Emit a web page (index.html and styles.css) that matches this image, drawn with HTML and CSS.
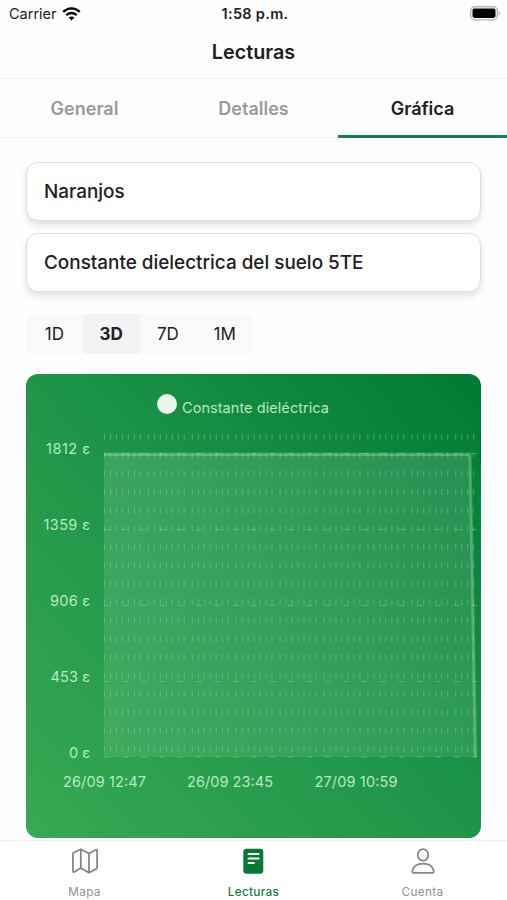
FILE: index.html
```html
<!DOCTYPE html>
<html lang="es">
<head>
    <meta charset="UTF-8">
    <meta name="viewport" content="width=device-width, initial-scale=1.0">
    <title>Lecturas</title>
    <link rel="stylesheet" href="styles.css">
</head>
<body>
    <div class="status-bar">
        <div class="carrier">
            <span>Carrier</span>
            <svg width="19" height="14" viewBox="0 0 19 14" fill="none" stroke="#000" stroke-width="2.4">
                <path d="M1.200 4.800C6 .2 13 .2 17.800 4.800"/>
                <path d="M4.200 8.200c3-2.900 7.600-2.900 10.600 0"/>
                <path d="M6.700 10.600c1.600-1.400 4-1.400 5.600 0L9.500 13.500z" fill="#000" stroke="none"/>
            </svg>
        </div>
        <div class="time">1:58 p.m.</div>
        <svg class="battery" width="31" height="15" viewBox="0 0 31 15">
            <rect x=".7" y=".7" width="26.600" height="13.200" rx="4" fill="#fff" stroke="#b5b5b5" stroke-width="1.400"/>
            <rect x="2.500" y="2.500" width="23" height="9.600" rx="2" fill="#000"/>
            <path d="M28.600 5v4.600q1.600-.8 1.600-2.300t-1.600-2.300z" fill="#b5b5b5"/>
        </svg>
    </div>
    <header>
        <h1>Lecturas</h1>
    </header>
    <nav class="tabs">
        <a class="tab">General</a>
        <a class="tab">Detalles</a>
        <a class="tab active">Gráfica</a>
    </nav>

    <main class="container">
        <div class="select">Naranjos</div>
        <div class="select">Constante dielectrica del suelo 5TE</div>
        <div class="ranges">
            <span class="range">1D</span>
            <span class="range selected">3D</span>
            <span class="range">7D</span>
            <span class="range">1M</span>
        </div>
        <div class="chart">
            <svg width="455" height="464" viewBox="26 374 455 464">
                <defs>
                    <linearGradient id="area" x1="0" y1="0" x2="0" y2="1">
                        <stop offset="0" stop-color="#fff" stop-opacity=".13"/>
                        <stop offset="1" stop-color="#fff" stop-opacity=".09"/>
                    </linearGradient>
                    <!-- one group of seven vertical grid lines -->
                    <pattern id="ticks" x="104" y="434" width="43.900" height="18.350" patternUnits="userSpaceOnUse">
                        <path d="M.5 0v6M6.500 0v6M12.500 0v6M18.400 0v6M24.400 0v6M30.400 0v6M36.300 0v6" stroke="#8fe0a4" stroke-opacity=".38" stroke-width="1"/>
                    </pattern>
                </defs>
                <path d="M104 454H470.500L476.500 757H104z" fill="url(#area)"/>
                <rect x="104" y="434" width="373" height="323" fill="url(#ticks)"/>
                <g class="grid">
                    <path d="M104 453.500H477"/>
                    <path d="M104 529.500H477"/>
                    <path d="M104 605.500H477"/>
                    <path d="M104 681.500H477"/>
                    <path d="M104 757H477"/>
                </g>
                <path class="line" d="M104 454.300H470L475.500 757"/>
                <circle cx="167" cy="404" r="10" fill="#e9f5ec"/>
                <text x="182" y="413" textLength="147">Constante dieléctrica</text>
                <g text-anchor="end">
                    <text x="90" y="454" textLength="44">1812 ε</text>
                    <text x="90" y="530" textLength="46.500">1359 ε</text>
                    <text x="90" y="606" textLength="40">906 ε</text>
                    <text x="90" y="681.500" textLength="39.500">453 ε</text>
                    <text x="90" y="757.500" textLength="21">0 ε</text>
                </g>
                <g text-anchor="middle">
                    <text x="104.500" y="787" textLength="83">26/09 12:47</text>
                    <text x="230" y="787" textLength="86">26/09 23:45</text>
                    <text x="356" y="787" textLength="83">27/09 10:59</text>
                </g>
            </svg>
        </div>
    </main>

    <footer>
        <a class="item">
            <svg width="30" height="28" viewBox="0 0 30 28" fill="none" stroke="#858585" stroke-width="1.900" stroke-linejoin="round">
                <path d="M10.500 1.300 2.600 5.200Q2 5.500 2 6.300V25q0 1.500 1.300.9l7.200-4.300 8.800 5L27.200 22.500q.8-.4.800-1.200V2.700q0-1.400-1.300-.9L19.300 6z"/>
                <path d="M10.500 1.300v20.300M19.300 6v20.600"/>
            </svg>
            <span>Mapa</span>
        </a>
        <a class="item active">
            <svg width="30" height="28" viewBox="0 0 30 28">
                <rect x="3.500" y=".8" width="21.500" height="26.800" rx="3.500" fill="#057a35"/>
                <path d="M9 6.500h11M9 11.300h11M9 16.100h6" stroke="#fff" stroke-width="2" stroke-linecap="round"/>
            </svg>
            <span>Lecturas</span>
        </a>
        <a class="item">
            <svg width="30" height="28" viewBox="0 0 30 28" fill="none" stroke="#858585" stroke-width="1.900" stroke-linejoin="round">
                <ellipse cx="15" cy="7.500" rx="5.600" ry="6.200"/>
                <path d="M15 16.800c-6 0-10.400 3-11.500 7.700-.3 1.500.2 2.400 1.500 2.400h20c1.300 0 1.800-.9 1.500-2.400C25.400 19.800 21 16.800 15 16.800z"/>
            </svg>
            <span>Cuenta</span>
        </a>
    </footer>
</body>
</html>
```

FILE: styles.css
```css
* {
    box-sizing: border-box;
}
body {
    font-family: Inter, "Liberation Sans", sans-serif;
    background-color: #fefefe;
    color: #202020;
    margin: 0;
    height: 900px;
    display: flex;
    flex-direction: column;
    overflow: hidden;
}
.status-bar {
    display: grid;
    grid-template-columns: 1fr auto 1fr;
    align-items: center;
    height: 27px;
    padding: 0 6px 0 9px;
    font-size: 14.5px;
}
.carrier {
    display: flex;
    align-items: center;
    gap: 5px;
}
.time {
    font-weight: 600;
    letter-spacing: 0.3px;
}
.battery {
    justify-self: end;
}
header {
    height: 52px;
    border-bottom: 1px solid #f0f0f0;
    text-align: center;
}
h1 {
    margin: 0;
    font-size: 19.8px;
    line-height: 51px;
    font-weight: 600;
}
.tabs {
    display: flex;
    height: 59px;
    border-bottom: 1px solid #f0f0f0;
}
.tab {
    flex: 1;
    height: 59px;
    line-height: 59px;
    text-align: center;
    font-size: 18px;
    font-weight: 600;
    color: #999;
}
.tab.active {
    color: #202020;
    border-bottom: 3px solid #16804a;
}
.container {
    padding: 24px 26px 0;
    height: 702px;
}
.select {
    height: 59px;
    margin-bottom: 12px;
    padding: 0 17px;
    border: 1px solid #dedede;
    border-radius: 12px;
    background-color: white;
    box-shadow: 0 4px 7px rgba(0, 0, 0, 0.12);
    font-size: 18.9px;
    font-weight: 500;
    line-height: 58px;
}
.ranges {
    display: flex;
    width: 227px;
    height: 40px;
    margin-top: 22px;
    border-radius: 6px;
    background-color: #fafafa;
    overflow: hidden;
}
.range {
    flex: 1;
    text-align: center;
    font-size: 17px;
    line-height: 40px;
}
.range.selected {
    font-weight: 700;
    background-color: #f2f2f2;
    border-radius: 4px;
}
.chart {
    height: 464px;
    margin-top: 20px;
    border-radius: 12px;
    background: linear-gradient(to top right, #38a954, #1b9346 55%, #007a33);
    overflow: hidden;
}
.chart svg {
    display: block;
}
.chart text {
    font-size: 14.5px;
    fill: #b9e8c5;
}
.grid path {
    stroke: #8fe0a4;
    stroke-opacity: 0.4;
    stroke-dasharray: 6 12.4;
}
.line {
    fill: none;
    stroke: white;
    stroke-opacity: 0.22;
    stroke-width: 3.2;
}
footer {
    display: flex;
    height: 60px;
    flex-shrink: 0;
    border-top: 1px solid #eee;
    background-color: white;
}
.item {
    flex: 1;
    display: flex;
    flex-direction: column;
    align-items: center;
    padding-top: 7px;
    font-size: 11.8px;
    letter-spacing: 0.3px;
    color: #929292;
}
.item span {
    margin-top: 10px;
    line-height: 16px;
}
.item.active {
    color: #128044;
    font-weight: 500;
}
```
